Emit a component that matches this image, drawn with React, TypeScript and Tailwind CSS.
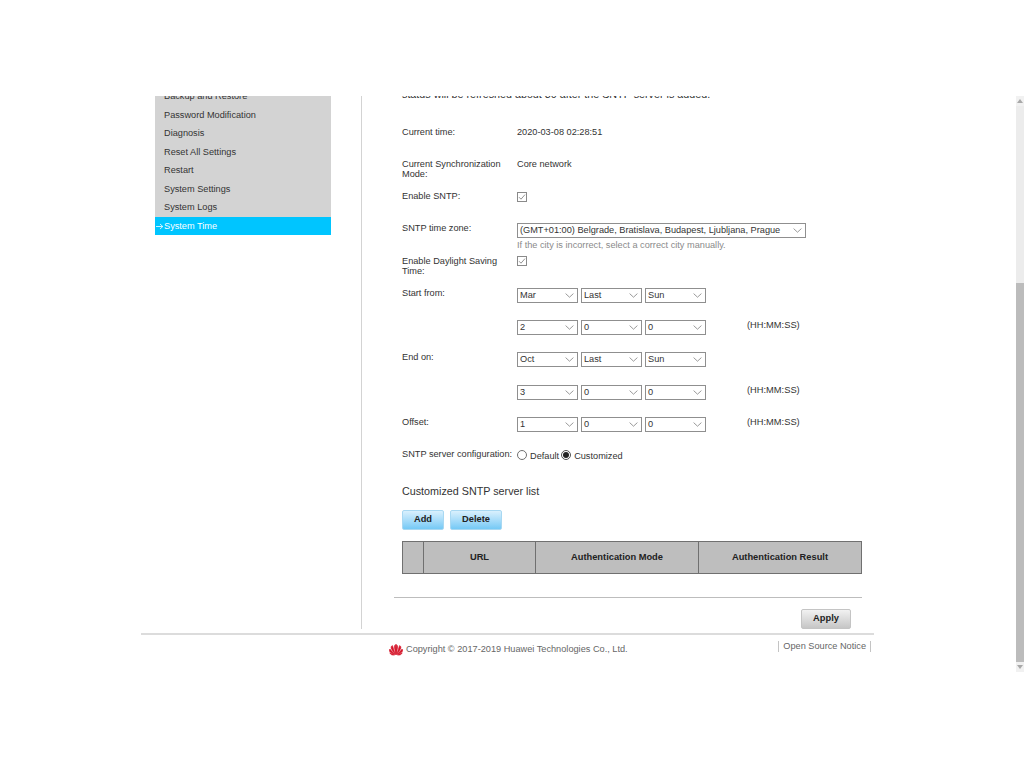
const Chevron = () => (
  <svg width="9" height="5" viewBox="0 0 9 5" className="shrink-0" fill="none" stroke="#808080" strokeWidth="0.8">
    <path d="M0.6 0.6 L4.5 4.2 L8.4 0.6" />
  </svg>
);

const Select = ({ value, w = "w-[61px]" }: { value: string; w?: string }) => (
  <div className={`${w} h-[14.5px] border border-[#8f8f8f] bg-white flex items-center justify-between pl-[2px] pr-[3px] leading-none text-[#333]`}>
    <span className="whitespace-nowrap">{value}</span>
    <Chevron />
  </div>
);

const Check = () => (
  <div className="w-[10px] h-[10px] border border-[#8a8a8a] bg-white flex items-center justify-center mt-[1px]">
    <svg width="8" height="8" viewBox="0 0 8 8" fill="none" stroke="#777" strokeWidth="0.8">
      <path d="M1 4.2 L3 6.2 L7 1.6" />
    </svg>
  </div>
);

const Label = ({ children }: { children?: React.ReactNode }) => (
  <div className="w-[115px] shrink-0 leading-[10px] whitespace-nowrap">{children}</div>
);

const Row = ({ h, label, children }: { h: string; label?: React.ReactNode; children?: React.ReactNode }) => (
  <div className={`${h} flex items-start`}>
    <Label>{label}</Label>
    {children}
  </div>
);

const Triple = ({ a, b, c, suffix }: { a: string; b: string; c: string; suffix?: boolean }) => (
  <div className="flex items-start gap-[3px]">
    <Select value={a} />
    <Select value={b} />
    <Select value={c} />
    {suffix && <span className="ml-[38px] leading-[10px] text-[9.3px]">(HH:MM:SS)</span>}
  </div>
);

const menu = ["Backup and Restore", "Password Modification", "Diagnosis", "Reset All Settings", "Restart", "System Settings", "System Logs"];

export default function App() {
  return (
    <div className="w-[1024px] h-[768px] bg-white pt-[96px] overflow-hidden text-[9.2px] text-[#333] [font-family:'Liberation_Sans',Arial,sans-serif]">
      <div className="flex h-[576px]">
        <div className="w-[1016px] h-[576px] overflow-hidden pl-[141px]">
          <div className="w-[733px]">
            <div className="flex h-[533px]">
              <aside className="ml-[14px] w-[176px] -mt-[9px] shrink-0 self-start">
                {menu.map((m) => (
                  <div key={m} className="h-[18.5px] bg-[#d3d3d3] pl-[9px] pt-[2px] flex items-center">{m}</div>
                ))}
                <div className="h-[18.5px] bg-[#00c5ff] text-white flex items-center pl-[1px] pt-[2px]">
                  <svg width="8" height="7" viewBox="0 0 8 7" fill="none" stroke="#fff" strokeWidth="0.8">
                    <path d="M0 3.5 H6.5 M4 1 L6.8 3.5 L4 6" />
                  </svg>
                  System Time
                </div>
              </aside>
              <main className="ml-[30px] w-[513px] border-l border-[#d3d3d3] overflow-hidden">
                <div className="pl-[40px] -mt-[7px]">
                  <div className="h-[38px] leading-[10px] whitespace-nowrap text-[10.75px]">status will be refreshed about 30 after the SNTP server is added.</div>
                  <Row h="h-[32px]" label="Current time:"><span className="leading-[10px]">2020-03-08 02:28:51</span></Row>
                  <Row h="h-[32px]" label={<>Current Synchronization<br />Mode:</>}><span className="leading-[10px]">Core network</span></Row>
                  <Row h="h-[32px]" label="Enable SNTP:"><Check /></Row>
                  <div className="h-[33px] flex items-start">
                    <Label>SNTP time zone:</Label>
                    <div>
                      <Select w="w-[289px]" value="(GMT+01:00) Belgrade, Bratislava, Budapest, Ljubljana, Prague" />
                      <div className="text-[#8a8a8a] leading-[10px] mt-[2.5px] whitespace-nowrap">If the city is incorrect, select a correct city manually.</div>
                    </div>
                  </div>
                  <Row h="h-[32px]" label={<>Enable Daylight Saving<br />Time:</>}><div className="-mt-[1px]"><Check /></div></Row>
                  <Row h="h-[32px]" label="Start from:"><Triple a="Mar" b="Last" c="Sun" /></Row>
                  <Row h="h-[32px]"><Triple a="2" b="0" c="0" suffix /></Row>
                  <Row h="h-[33px]" label="End on:"><Triple a="Oct" b="Last" c="Sun" /></Row>
                  <Row h="h-[32px]"><Triple a="3" b="0" c="0" suffix /></Row>
                  <Row h="h-[32px]" label="Offset:"><Triple a="1" b="0" c="0" suffix /></Row>
                  <div className="h-[35px] flex items-start whitespace-nowrap">
                    <Label>SNTP server configuration:</Label>
                    <div className="flex items-start">
                      <div className="w-[10px] h-[10px] rounded-full border border-[#707070] bg-white mt-[0.5px]" />
                      <span className="ml-[3px] mt-[2px] leading-[10px]">Default</span>
                      <div className="ml-[2px] w-[10px] h-[10px] rounded-full border border-[#505050] bg-white flex items-center justify-center mt-[0.5px]">
                        <div className="w-[6px] h-[6px] rounded-full bg-[#222]" />
                      </div>
                      <span className="ml-[3px] mt-[2px] leading-[10px]">Customized</span>
                    </div>
                  </div>
                  <div className="h-[26px] text-[10.75px] leading-[14px]">Customized SNTP server list</div>
                  <div className="flex gap-[6px] h-[31px]">
                    <button className="w-[42px] h-[19.5px] rounded-[2px] border border-[#a8d8f2] bg-gradient-to-b from-[#d9f0fd] to-[#74c9f5] text-[#222] font-bold text-[9.3px]">Add</button>
                    <button className="w-[52px] h-[19.5px] rounded-[2px] border border-[#a8d8f2] bg-gradient-to-b from-[#d9f0fd] to-[#74c9f5] text-[#222] font-bold text-[9.3px]">Delete</button>
                  </div>
                  <div className="w-[460px] h-[33px] flex bg-[#bebebe] border border-[#707070] font-bold text-[9.3px] text-[#222]">
                    <div className="w-[21px] border-r border-[#707070]" />
                    <div className="w-[112px] border-r border-[#707070] flex items-center justify-center">URL</div>
                    <div className="w-[163px] border-r border-[#707070] flex items-center justify-center">Authentication Mode</div>
                    <div className="flex-1 flex items-center justify-center">Authentication Result</div>
                  </div>
                </div>
                <div className="ml-[32px] mt-[23px] w-[468px] border-t border-[#bdbdbd]" />
                <div className="flex mt-[11px] ml-[439px]">
                  <button className="w-[50px] h-[19.5px] rounded-[2px] border border-[#c4c4c4] bg-gradient-to-b from-[#f2f2f2] to-[#c6c6c6] text-[#222] font-bold text-[9.3px]">Apply</button>
                </div>
              </main>
            </div>
            <div className="mt-[4px] border-t-2 border-[#dcdcdc] flex h-[36px]">
              <div className="ml-[248px] mt-[8px] flex items-center h-[13px] text-[#666] whitespace-nowrap">
                <svg width="14" height="12" viewBox="0 0 14 12" fill="#d5152a" stroke="#d5152a" strokeWidth="0.6" className="mr-[3px]">
                  <path d="M7 10.5 L5.3 3.2 C5.3 1.6 6.2 0.8 6.6 0.5 C6.9 2 7 7 7 10.5Z" />
                  <path d="M7 10.5 C7 7 7.1 2 7.4 0.5 C7.8 0.8 8.7 1.6 8.7 3.2Z" />
                  <path d="M6.4 10.5 L3.4 1.6 C2.4 2 1.9 3 2.2 4.2 C2.8 6 5 9 6.4 10.5Z" />
                  <path d="M7.6 10.5 L10.6 1.6 C11.6 2 12.1 3 11.8 4.2 C11.2 6 9 9 7.6 10.5Z" />
                  <path d="M5.8 10.6 L0.9 5 C0.2 5.8 0.1 6.8 0.7 7.6 C1.6 8.6 4 10 5.8 10.6Z" />
                  <path d="M8.2 10.6 L13.1 5 C13.8 5.8 13.9 6.8 13.3 7.6 C12.4 8.6 10 10 8.2 10.6Z" />
                  <path d="M5.4 11 L0.8 8.8 C1.4 10.6 3.4 11.4 5.4 11Z" />
                  <path d="M8.6 11 L13.2 8.8 C12.6 10.6 10.6 11.4 8.6 11Z" />
                </svg>
                Copyright © 2017-2019 Huawei Technologies Co., Ltd.
              </div>
              <div className="ml-auto mr-[3px] mt-[6px] h-[11px] border-x border-[#c4c4c4] px-[4px] flex items-center text-[#666] leading-none whitespace-nowrap">Open Source Notice</div>
            </div>
          </div>
        </div>
        <div className="w-[8px] h-[576px] bg-[#ececec] flex flex-col">
          <div className="h-[10px] bg-[#f1f1f1] flex items-center justify-center">
            <svg width="6" height="4" viewBox="0 0 6 4" fill="#a8a8a8"><path d="M3 0 L6 4 L0 4Z" /></svg>
          </div>
          <div className="mt-[177px] h-[379px] bg-[#bcbcbc]" />
          <div className="h-[10px] bg-[#f1f1f1] flex items-center justify-center">
            <svg width="6" height="4" viewBox="0 0 6 4" fill="#a8a8a8"><path d="M3 4 L6 0 L0 0Z" /></svg>
          </div>
        </div>
      </div>
    </div>
  );
}
